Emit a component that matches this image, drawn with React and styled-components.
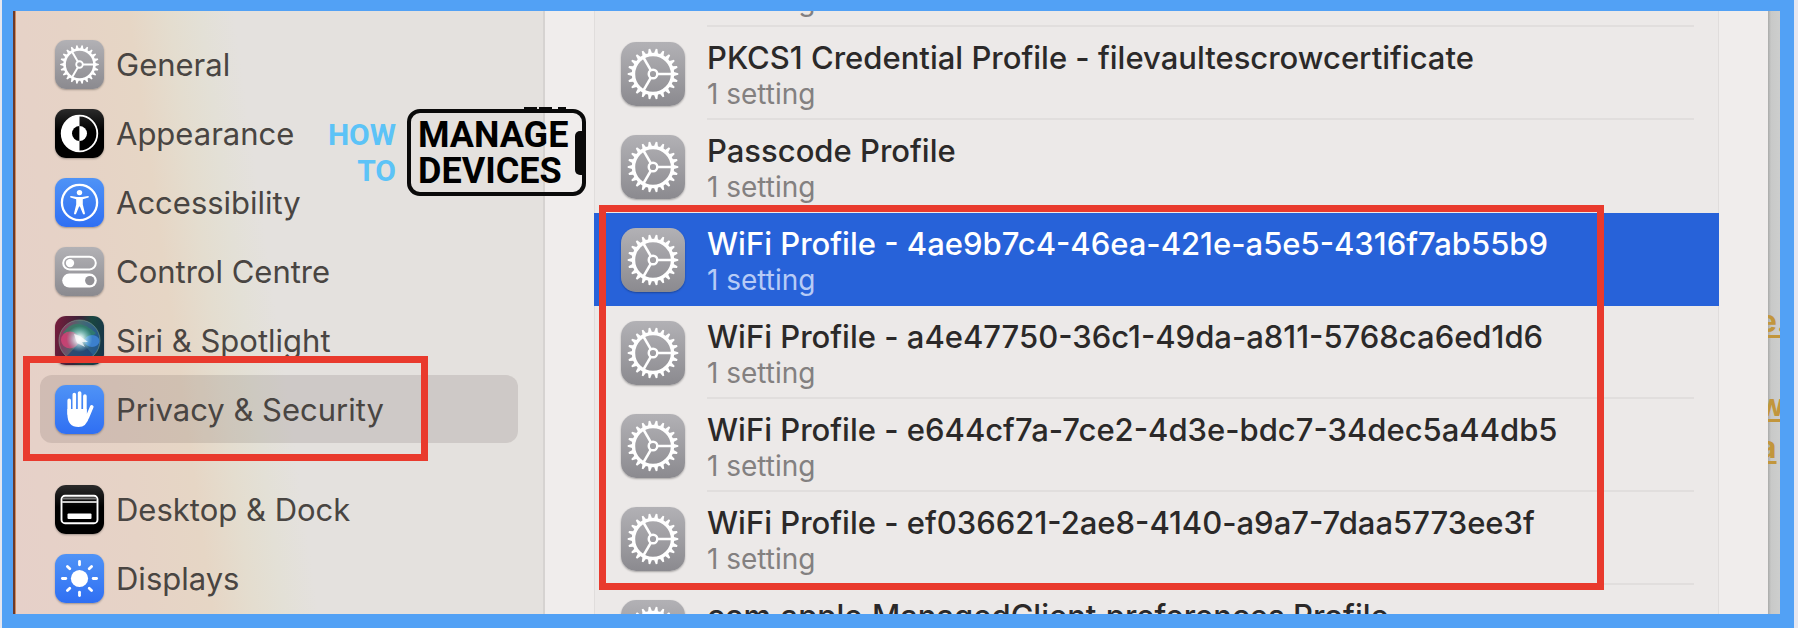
import React from 'react'
import styled, { createGlobalStyle, css } from 'styled-components'

const GlobalStyle = createGlobalStyle`
    * {
        box-sizing: border-box;
    }
    body {
        margin: 0;
        background: #e6e7f0;
        font-family: Inter, 'Liberation Sans', sans-serif;
    }
`
const Frame = styled.div`
    display: flex;
    height: 100vh;
    margin: 0 4px 0 2px;
    border: 14px solid #52a1f5;
    border-top-width: 11px;
    border-left-width: 11px;
    overflow: hidden;
`
const Edge = styled.div`
    flex: 0 0 3px;
    background: linear-gradient(90deg, #6b3a2c 0 2px, #cf8a5c 2px 3px);
`
const Sidebar = styled.nav`
    position: relative;
    z-index: 1;
    flex: 0 0 529px;
    display: flex;
    flex-direction: column;
    gap: 1px;
    padding: 19px 25px 0 24px;
    border-right: 2px solid #d6d3d1;
    background: linear-gradient(
        82deg,
        #e6d0c9 0px,
        #e6d3c6 130px,
        #e6d6c5 195px,
        #e4ddcf 235px,
        #e3e0d6 265px,
        #e4e1de 300px
    );
`
const SidebarItem = styled.button`
    display: flex;
    align-items: center;
    gap: 12px;
    flex: 0 0 68px;
    margin-top: ${(p) => (p.$newGroup ? 31 : 0)}px;
    padding: 0 0 0 15px;
    border: 0;
    border-radius: 12px;
    background: ${(p) => (p.$active ? 'rgba(60, 50, 45, 0.13)' : 'transparent')};
    color: #494542;
    font-family: inherit;
    font-size: 31px;
    line-height: 40px;
    text-align: left;
    white-space: nowrap;
`
const SidebarLabel = styled.span`
    padding-top: 2px;
`
const tileColors = {
    gray: 'linear-gradient(#b2b1b5, #8b8a8f)',
    black: 'linear-gradient(#2b2b2b, #000 45%)',
    blue: 'linear-gradient(#4f93f6, #2f6ff3)',
    siri: 'linear-gradient(100deg, #7a1c3c, #3a2338 45%, #1a4640 65%, #17324c)',
}
const Tile = styled.span`
    flex: none;
    display: block;
    width: ${(p) => p.$size}px;
    height: ${(p) => p.$size}px;
    border-radius: ${(p) => (p.$size > 50 ? 15 : 11)}px;
    background: ${(p) => tileColors[p.$color]};
    box-shadow: 0 1px 2px rgba(0, 0, 0, 0.3);
    overflow: hidden;
    svg {
        display: block;
        width: 100%;
        height: 100%;
    }
`
const Content = styled.main`
    flex: 1;
    min-width: 0;
    padding: 0 49px;
    background: #f0edec;
`
const ProfileList = styled.ul`
    position: relative;
    display: flow-root;
    margin: 0;
    padding: 0;
    height: 100%;
    list-style: none;
    background: #ece9e8;
    box-shadow: inset 1px 0 #e0dddc, inset -1px 0 #e0dddc;
`
const ProfileRow = styled.li`
    display: flex;
    gap: 22px;
    height: 93px;
    padding: 0 25px 0 27px;
    ${(p) =>
        p.$selected &&
        css`
            background: #2762d9;
        `}
    ${Tile} {
        margin-top: 15px;
    }
`
// last line of the row that is scrolled out above
const ScrolledRow = styled(ProfileRow)`
    align-items: flex-end;
    height: 43px;
    margin-top: -27px;
    padding-left: 113px;
`
const ProfileText = styled.div`
    flex: 1;
    min-width: 0;
    padding-top: ${(p) => (p.$scrolled ? 0 : 11)}px;
    padding-bottom: ${(p) => (p.$scrolled ? 8 : 0)}px;
    border-bottom: 2px solid ${(p) => (p.$line ? '#e1dedd' : 'transparent')};
    white-space: nowrap;
`
const ProfileName = styled.div`
    color: ${(p) => (p.$selected ? '#fff' : '#2b2929')};
    font-size: 31px;
    font-weight: 500;
    line-height: 40px;
`
const ProfileNote = styled.div`
    color: ${(p) => (p.$selected ? '#b7cbf6' : '#838080')};
    font-size: 28px;
    line-height: 32px;
`
const Backdrop = styled.div`
    flex: 0 0 12px;
    padding: 289px 0 0;
    overflow: hidden;
    background: linear-gradient(90deg, #a9aaa9, #c8c9c8 3px, #cdcecd);
    color: #c2963c;
    font-size: 30px;
    font-weight: 700;
    line-height: 42px;
    white-space: pre;
`
const BackdropLine = styled.div`
    height: 42px;
    margin-left: -9px;
    text-decoration: underline 3px;
    text-underline-offset: 3px;
    text-decoration-skip-ink: none;
`
const Highlight = styled.div`
    position: absolute;
    border: 7px solid #e93a2d;
    pointer-events: none;
`
const SidebarHighlight = styled(Highlight)`
    top: 345px;
    left: 7px;
    width: 405px;
    height: 105px;
`
const ListHighlight = styled(Highlight)`
    top: 194px;
    left: 5px;
    right: 115px;
    height: 385px;
`
const Watermark = styled.div`
    position: absolute;
    top: 98px;
    right: -43px;
    display: flex;
    gap: 11px;
    font-family: Roboto, 'Liberation Sans', sans-serif;
    font-weight: 700;
    line-height: 36px;
`
const HowTo = styled.div`
    padding-top: 8px;
    color: #5cc3f7;
    font-size: 30px;
    text-align: right;
`
const Phone = styled.div`
    position: relative;
    width: 179px;
    height: 87px;
    padding: 4px 0 0 7px;
    border: 4px solid #0a0a0a;
    border-radius: 13px;
    color: #000;
    font-size: 36px;
    &::before {
        content: '';
        position: absolute;
        top: -6px;
        right: 16px;
        width: 42px;
        height: 3px;
        background: linear-gradient(90deg, #0a0a0a 0 13px, transparent 13px 15px, #0a0a0a 15px 28px, transparent 28px 34px, #0a0a0a 34px);
    }
    &::after {
        content: '';
        position: absolute;
        top: 18px;
        right: -1px;
        width: 8px;
        height: 44px;
        border-radius: 5px 0 0 5px;
        background: #0a0a0a;
    }
`

const teeth = Array.from({ length: 22 }, (_, i) => (i * 360) / 22)

const GearIcon = () => (
    <svg viewBox="0 0 64 64" fill="none" stroke="#fff" aria-hidden="true">
        <circle cx="32" cy="32" r="19.5" strokeWidth="3.4" />
        {teeth.map((a) => (
            <path
                key={a}
                d="M52 29.8 L57.3 31.2 V32.8 L52 34.2 Z"
                fill="#fff"
                stroke="none"
                transform={`rotate(${a} 32 32)`}
            />
        ))}
        <circle cx="32" cy="32" r="4.3" strokeWidth="2.4" />
        {[0, 120, 240].map((a) => (
            <path key={a} d="M36.5 32 H51" strokeWidth="2.6" transform={`rotate(${a} 32 32)`} />
        ))}
    </svg>
)
const AppearanceIcon = () => (
    <svg viewBox="0 0 49 49" aria-hidden="true">
        <circle cx="24.5" cy="24.5" r="17.8" fill="none" stroke="#fff" strokeWidth="1.8" />
        <path d="M24.5 6.7 A17.8 17.8 0 0 0 24.5 42.3 Z" fill="#fff" />
        <path d="M24.5 17 A7.5 7.5 0 0 0 24.5 32 Z" fill="#000" />
        <path d="M24.5 17 A7.5 7.5 0 0 1 24.5 32 Z" fill="#fff" />
    </svg>
)
const AccessibilityIcon = () => (
    <svg viewBox="0 0 49 49" fill="#fff" aria-hidden="true">
        <circle cx="24.5" cy="24.5" r="17.6" fill="none" stroke="#fff" strokeWidth="2.3" />
        <circle cx="24.5" cy="14.6" r="2.7" />
        <path d="M15.8 18 L22 19 H27 L33.2 18 Q34.4 18.3 33.6 19.6 L27.8 21.2 V26.5 L30 35.4 Q29.4 37 28 36 L24.9 28.5 H24.1 L21 36 Q19.6 37 19 35.4 L21.2 26.5 V21.2 L15.4 19.6 Q14.6 18.3 15.8 18 Z" />
    </svg>
)
const ControlIcon = () => (
    <svg viewBox="0 0 49 49" aria-hidden="true">
        <rect x="8.2" y="9.8" width="32.6" height="12.6" rx="6.3" fill="none" stroke="#fff" strokeWidth="2" />
        <circle cx="15" cy="16.1" r="4.2" fill="#fff" />
        <rect x="7.2" y="26.6" width="34.6" height="14" rx="7" fill="#fff" />
        <circle cx="34.8" cy="33.6" r="4.7" fill="#929196" />
    </svg>
)
const SiriIcon = () => (
    <svg viewBox="0 0 49 49" aria-hidden="true">
        <defs>
            <radialGradient id="siriGlow">
                <stop offset="0" stopColor="#fff" />
                <stop offset="0.3" stopColor="#eafcff" stopOpacity="0.8" />
                <stop offset="1" stopColor="#7fe0e0" stopOpacity="0" />
            </radialGradient>
            <linearGradient id="siriOrb" x1="0" y1="0" x2="1" y2="0.2">
                <stop offset="0" stopColor="#a3285c" />
                <stop offset="0.5" stopColor="#496b70" />
                <stop offset="1" stopColor="#235a8e" />
            </linearGradient>
        </defs>
        <circle cx="24.5" cy="24.5" r="20.5" fill="url(#siriOrb)" stroke="#7ea08f" strokeOpacity="0.6" />
        <path d="M8 17 Q20 -1 41 17 Q34 24 24 24 Z" fill="#2f8468" opacity="0.7" />
        <ellipse cx="15" cy="24" rx="9" ry="8.5" fill="#dd4277" opacity="0.75" />
        <ellipse cx="37" cy="25" rx="7.5" ry="6" fill="#3f86d8" opacity="0.85" />
        <path d="M26 25 L12 40 Q24 48 38 39 Z" fill="#203f70" opacity="0.7" />
        <circle cx="24.5" cy="23" r="13" fill="url(#siriGlow)" />
        <path d="M19 18 L25 20 L33 26 L27 26 L30 31 L22 27 Z" fill="#fff" opacity="0.7" />
    </svg>
)
const HandIcon = () => (
    <svg viewBox="0 0 49 49" fill="none" stroke="#fff" strokeLinecap="round" aria-hidden="true">
        <path d="M14.2 15.4 V29 M19.3 9.6 V27 M24.6 8 V27 M29.9 11 V28" strokeWidth="3.6" />
        <path d="M36.8 21.8 L32.5 32" strokeWidth="3.6" />
        <path
            d="M12.4 24 H31.7 V28.5 L34.2 32 Q31.5 42 23.5 42 Q12.4 42 12.4 29 Z"
            fill="#fff"
            stroke="none"
        />
    </svg>
)
const DockIcon = () => (
    <svg viewBox="0 0 49 49" aria-hidden="true">
        <rect x="6.5" y="10.8" width="36" height="27.4" rx="3.5" fill="none" stroke="#fff" strokeWidth="1.9" />
        <path d="M8 13.6 H41" stroke="#777" strokeWidth="2" />
        <path d="M7 17 H42" stroke="#c9c9c9" strokeWidth="2" />
        <rect x="12.5" y="28.6" width="24" height="5.4" rx="1" fill="#fff" />
    </svg>
)
const DisplaysIcon = () => (
    <svg viewBox="0 0 49 49" aria-hidden="true">
        <circle cx="24.5" cy="24.5" r="8.6" fill="#fff" />
        {[0, 45, 90, 135, 180, 225, 270, 315].map((a) => (
            <path
                key={a}
                d="M38.2 24.5 H41.6"
                stroke="#fff"
                strokeWidth="2.8"
                strokeLinecap="round"
                transform={`rotate(${a} 24.5 24.5)`}
            />
        ))}
    </svg>
)

const sections = [
    { label: 'General', color: 'gray', Icon: GearIcon },
    { label: 'Appearance', color: 'black', Icon: AppearanceIcon },
    { label: 'Accessibility', color: 'blue', Icon: AccessibilityIcon },
    { label: 'Control Centre', color: 'gray', Icon: ControlIcon },
    { label: 'Siri & Spotlight', color: 'siri', Icon: SiriIcon },
    { label: 'Privacy & Security', color: 'blue', Icon: HandIcon, active: true },
    { label: 'Desktop & Dock', color: 'black', Icon: DockIcon, newGroup: true },
    { label: 'Displays', color: 'blue', Icon: DisplaysIcon },
]

const profiles = [
    { name: 'PKCS1 Credential Profile - filevaultescrowcertificate' },
    { name: 'Passcode Profile', noLine: true },
    { name: 'WiFi Profile - 4ae9b7c4-46ea-421e-a5e5-4316f7ab55b9', selected: true, noLine: true },
    { name: 'WiFi Profile - a4e47750-36c1-49da-a811-5768ca6ed1d6' },
    { name: 'WiFi Profile - e644cf7a-7ce2-4d3e-bdc7-34dec5a44db5' },
    { name: 'WiFi Profile - ef036621-2ae8-4140-a9a7-7daa5773ee3f' },
    { name: 'com.apple.ManagedClient.preferences Profile' },
]

const App = () => {
    return (
        <>
            <GlobalStyle />
            <Frame>
                <Edge />
                <Sidebar>
                    {sections.map(({ label, color, Icon, active, newGroup }) => (
                        <SidebarItem key={label} type="button" $active={active} $newGroup={newGroup}>
                            <Tile $size={49} $color={color}>
                                <Icon />
                            </Tile>
                            <SidebarLabel>{label}</SidebarLabel>
                        </SidebarItem>
                    ))}
                    <SidebarHighlight />
                    <Watermark>
                        <HowTo>
                            HOW
                            <br />
                            TO
                        </HowTo>
                        <Phone>
                            MANAGE
                            <br />
                            DEVICES
                        </Phone>
                    </Watermark>
                </Sidebar>
                <Content>
                    <ProfileList>
                        <ScrolledRow>
                            <ProfileText $scrolled $line>
                                <ProfileNote>1 setting</ProfileNote>
                            </ProfileText>
                        </ScrolledRow>
                        {profiles.map(({ name, selected, noLine }) => (
                            <ProfileRow key={name} $selected={selected}>
                                <Tile $size={64} $color="gray">
                                    <GearIcon />
                                </Tile>
                                <ProfileText $line={!noLine}>
                                    <ProfileName $selected={selected}>{name}</ProfileName>
                                    <ProfileNote $selected={selected}>1 setting</ProfileNote>
                                </ProfileText>
                            </ProfileRow>
                        ))}
                        <ListHighlight />
                    </ProfileList>
                </Content>
                <Backdrop>
                    <BackdropLine>e.</BackdropLine>
                    <BackdropLine />
                    <BackdropLine>w</BackdropLine>
                    <BackdropLine>a</BackdropLine>
                </Backdrop>
            </Frame>
        </>
    )
}

export default App
